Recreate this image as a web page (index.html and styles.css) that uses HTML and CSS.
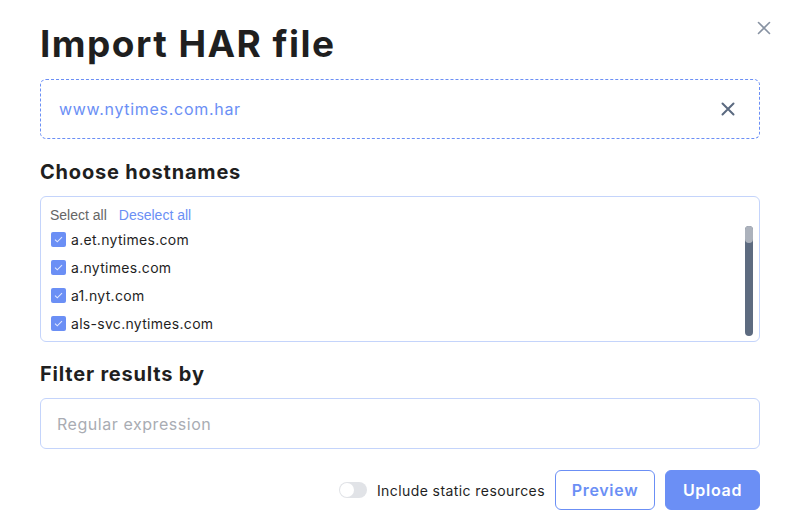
FILE: index.html
```html
<!DOCTYPE html>
<html lang="en">
<head>
    <meta charset="UTF-8">
    <meta name="viewport" content="width=device-width, initial-scale=1.0">
    <title>Import HAR file</title>
    <link rel="stylesheet" href="styles.css">
</head>
<body>
    <div class="dialog">
        <button class="dialog-close" aria-label="Close">
            <svg width="14" height="14" viewBox="0 0 14 14"><path d="M1.5 1.5l11 11M12.5 1.5l-11 11" stroke="currentColor" stroke-width="1.6" stroke-linecap="round"/></svg>
        </button>

        <h1 class="title">Import HAR file</h1>

        <div class="dropzone">
            <span class="file-name">www.nytimes.com.har</span>
            <button class="file-remove" aria-label="Remove file">
                <svg width="14" height="14" viewBox="0 0 14 14"><path d="M1.5 1.5l11 11M12.5 1.5l-11 11" stroke="currentColor" stroke-width="2" stroke-linecap="round"/></svg>
            </button>
        </div>

        <h2 class="section-title">Choose hostnames</h2>
        <div class="hosts">
            <div class="hosts-actions">
                <span class="select-all">Select all</span>
                <span class="deselect-all">Deselect all</span>
            </div>
            <div class="hosts-body">
                <ul class="host-list" id="host-list"></ul>
                <div class="scrollbar"><div class="scrollbar-thumb"></div></div>
            </div>
        </div>

        <h2 class="section-title">Filter results by</h2>
        <input class="filter-input" type="text" placeholder="Regular expression">

        <div class="footer">
            <label class="toggle">
                <span class="toggle-track"><span class="toggle-knob"></span></span>
                <span class="toggle-label">Include static resources</span>
            </label>
            <button class="btn btn-outline">Preview</button>
            <button class="btn btn-primary">Upload</button>
        </div>
    </div>

    <script>
        // only the rows that fit in the box are shown
        const hosts = ['a.et.nytimes.com', 'a.nytimes.com', 'a1.nyt.com', 'als-svc.nytimes.com'];
        const list = document.getElementById('host-list');
        hosts.forEach(host => {
            const li = document.createElement('li');
            li.className = 'host';
            li.innerHTML = '<span class="check"><svg width="9" height="7" viewBox="0 0 9 7"><path d="M1 3.6l2.3 2.2L8 1.2" fill="none" stroke="currentColor" stroke-width="1.1"/></svg></span>' + host;
            list.appendChild(li);
        });
    </script>
</body>
</html>
```

FILE: styles.css
```css
body {
    margin: 0;
    background-color: #fff;
    font-family: Inter, "Noto Sans", sans-serif;
    color: #1f1f1f;
}
button {
    font-family: inherit;
    cursor: pointer;
}
.dialog {
    position: relative;
    padding: 22px 40px 0;
}
.dialog-close {
    position: absolute;
    top: 21px;
    right: 29px;
    padding: 0;
    border: none;
    background: none;
    color: #8792a2;
    display: flex;
}
.title {
    margin: 0;
    font-size: 37px;
    line-height: 44px;
    font-weight: 700;
    letter-spacing: 1.45px;
}
.dropzone {
    margin-top: 13px;
    height: 58px;
    border: 1px dashed #6b8ff5;
    border-radius: 6px;
    display: flex;
    align-items: center;
    justify-content: space-between;
    padding: 0 24px 0 18px;
}
.file-name {
    color: #6b8ff5;
    font-size: 16px;
    letter-spacing: 0.7px;
}
.file-remove {
    padding: 0;
    border: none;
    background: none;
    color: #5b6a80;
    display: flex;
}
.section-title {
    margin: 19px 0 0;
    font-size: 20px;
    line-height: 28px;
    font-weight: 700;
    letter-spacing: 0.8px;
}
.hosts + .section-title {
    margin-top: 18px;
}
.hosts {
    margin-top: 10px;
    height: 137px;
    border: 1px solid #c4d4fb;
    border-radius: 6px;
    padding: 7px 6px 0 9px;
    display: flex;
    flex-direction: column;
}
.hosts-actions {
    height: 21px;
    display: flex;
    align-items: center;
    gap: 12px;
    font-family: "Liberation Sans", Arial, sans-serif;
    font-size: 14px;
}
.select-all {
    color: #666;
}
.deselect-all {
    color: #6b8ff5;
}
.hosts-body {
    display: flex;
    height: 110px;
    padding-top: 1px;
}
.host-list {
    flex: 1;
    list-style: none;
    margin: -1px 0 0;
    padding: 0;
}
.scrollbar {
    width: 8px;
    height: 110px;
    border-radius: 4px;
    background-color: #5d6b80;
}
.scrollbar-thumb {
    height: 17px;
    border-radius: 4px;
    background-color: #acb2bc;
}
.host {
    height: 28px;
    display: flex;
    align-items: center;
    gap: 5px;
    font-size: 14px;
    letter-spacing: 0.3px;
    color: #1f1f1f;
}
.check {
    width: 15px;
    height: 15px;
    border-radius: 2px;
    background-color: #6b8ff5;
    color: #dfe7ff;
    display: flex;
    align-items: center;
    justify-content: center;
    margin-left: 1px;
}
.filter-input {
    display: block;
    box-sizing: border-box;
    width: 100%;
    margin-top: 10px;
    height: 51px;
    border: 1px solid #c4d4fb;
    border-radius: 6px;
    padding: 0 16px;
    font-family: inherit;
    font-size: 16px;
    letter-spacing: 0.55px;
    color: #1f1f1f;
    outline: none;
}
.filter-input::placeholder {
    color: #a9acb3;
}
.footer {
    margin-top: 21px;
    display: flex;
    justify-content: flex-end;
    align-items: center;
    gap: 10px;
}
.toggle {
    display: flex;
    align-items: center;
    gap: 10px;
}
.toggle-track {
    width: 28px;
    height: 16px;
    border-radius: 8px;
    background-color: #e1e3e7;
    display: flex;
    align-items: center;
    padding: 0 1px;
    box-sizing: border-box;
}
.toggle-knob {
    width: 14px;
    height: 14px;
    border-radius: 50%;
    background-color: #fff;
}
.toggle-label {
    font-size: 14px;
    letter-spacing: 0.42px;
    color: #1f1f1f;
}
.btn {
    height: 40px;
    border-radius: 6px;
    font-size: 16px;
    font-weight: 600;
    letter-spacing: 0.7px;
    padding: 0;
}
.btn-outline {
    width: 100px;
    border: 1px solid #6b8ff5;
    background-color: #fff;
    color: #6b8ff5;
}
.btn-primary {
    width: 95px;
    border: 1px solid #6b8ff5;
    background-color: #6b8ff5;
    color: #fff;
}
```
